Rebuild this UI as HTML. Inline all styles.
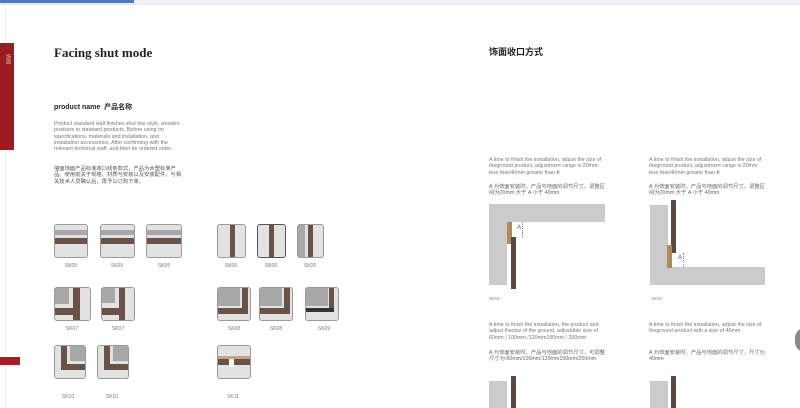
<!DOCTYPE html><html><head><meta charset="utf-8"><style>
*{margin:0;padding:0;box-sizing:border-box}
body{width:800px;height:408px;background:#fff;position:relative;overflow:hidden;font-family:"Liberation Sans","Noto Sans CJK SC",sans-serif}
.a{position:absolute}
.t{position:absolute;border:1px solid #9a9a9a;border-radius:3px;background:#e2e2e2;overflow:hidden}
.t div{position:absolute}
.g{background:#a8a8a8}.b{background:#6b5248}.w{background:#fff}.tan{background:#c7a57a}
.lb{position:absolute;font-size:5px;color:#777;width:40px;text-align:center}
.p{position:absolute;font-size:5.3px;line-height:6.3px;color:#777}
</style></head><body>
<div class="a" style="left:0;top:0;width:800px;height:4px;background:#eef0f3"></div>
<div class="a" style="left:0;top:0;width:134px;height:3px;background:#4a78c4"></div>
<div class="a" style="left:0;top:4px;width:800px;height:1px;background:#e6e6e6"></div>
<div class="a" style="left:5px;top:5px;width:1px;height:403px;background:#eee"></div>
<div class="a" style="left:0;top:43px;width:14px;height:107px;background:#9b1c20"></div>
<div class="a" style="left:5px;top:54px;font-size:5px;color:#e8c0c0;writing-mode:vertical-rl">饰面</div>
<div class="a" style="left:0;top:357px;width:20px;height:8px;background:#a81c22"></div>
<div class="a" style="left:54px;top:45px;font:bold 13px 'Liberation Serif',serif;color:#222">Facing shut mode</div>
<div class="a" style="left:54px;top:102px;font-size:7px;font-weight:bold;color:#222">product name &nbsp;产品名称</div>
<div class="p" style="left:54px;top:121px;width:130px">Product standard wall finishes shut line style, wooden products in standard products, Before using on specifications, materials and installation, and installation accessories, After confirming with the relevant technical staff, and then be ordered order.</div>
<div class="p" style="left:54px;top:166px;width:130px;color:#555">墙面饰面产品标准收口线条款式，产品为木塑标准产品。使用前关于规格、材质与安装以及安装配件，与相关技术人员确认后，再予以订购下单。</div>

<!-- row1 SK05 -->
<div class="t" style="left:54px;top:224px;width:34px;height:34px"><div class="g" style="left:0;top:5px;width:34px;height:5px"></div><div class="b" style="left:0;top:13px;width:34px;height:6px"></div></div>
<div class="t" style="left:100px;top:224px;width:35px;height:34px"><div class="g" style="left:0;top:5px;width:35px;height:5px"></div><div class="b" style="left:0;top:13px;width:35px;height:6px"></div></div>
<div class="t" style="left:146px;top:224px;width:36px;height:34px"><div class="g" style="left:0;top:5px;width:36px;height:5px"></div><div class="b" style="left:0;top:13px;width:36px;height:6px"></div></div>
<div class="lb" style="left:51px;top:263px">SK05</div><div class="lb" style="left:97px;top:263px">SK05</div><div class="lb" style="left:144px;top:263px">SK05</div>
<!-- SK06 -->
<div class="t" style="left:217px;top:224px;width:29px;height:34px"><div class="b" style="left:12px;top:0;width:5px;height:34px"></div></div>
<div class="t" style="left:257px;top:224px;width:29px;height:34px;border-color:#555"><div class="b" style="left:11px;top:0;width:5px;height:34px"></div></div>
<div class="t" style="left:297px;top:224px;width:27px;height:34px"><div class="g" style="left:0;top:0;width:7px;height:34px"></div><div class="b" style="left:10px;top:0;width:5px;height:34px"></div></div>
<div class="lb" style="left:211px;top:263px">SK06</div><div class="lb" style="left:251px;top:263px">SK06</div><div class="lb" style="left:290px;top:263px">SK06</div>
<!-- row2 -->
<div class="t" style="left:54px;top:287px;width:37px;height:34px"><div class="g" style="left:0;top:0;width:14px;height:16px"></div><div class="b" style="left:18px;top:0;width:7px;height:34px"></div><div class="b" style="left:0;top:20px;width:25px;height:7px"></div></div>
<div class="t" style="left:101px;top:287px;width:34px;height:34px"><div class="g" style="left:0;top:0;width:13px;height:15px"></div><div class="b" style="left:17px;top:0;width:6px;height:34px"></div><div class="b" style="left:0;top:20px;width:23px;height:7px"></div></div>
<div class="lb" style="left:52px;top:326px">SK07</div><div class="lb" style="left:98px;top:326px">SK07</div>
<div class="t" style="left:217px;top:287px;width:34px;height:34px"><div class="g" style="left:0;top:0;width:22px;height:18px"></div><div class="b" style="left:24px;top:0;width:6px;height:26px"></div><div class="b" style="left:0;top:20px;width:30px;height:6px"></div></div>
<div class="t" style="left:259px;top:287px;width:34px;height:34px"><div class="g" style="left:0;top:0;width:22px;height:18px"></div><div class="b" style="left:24px;top:0;width:6px;height:26px"></div><div class="b" style="left:0;top:20px;width:30px;height:6px"></div></div>
<div class="t" style="left:305px;top:287px;width:34px;height:34px"><div class="g" style="left:0;top:0;width:22px;height:18px"></div><div class="b" style="left:23px;top:0;width:5px;height:24px"></div><div class="b" style="left:0;top:20px;width:28px;height:4px;background:#333"></div></div>
<div class="lb" style="left:214px;top:326px">SK08</div><div class="lb" style="left:256px;top:326px">SK08</div><div class="lb" style="left:304px;top:326px">SK09</div>
<!-- row3 -->
<div class="t" style="left:54px;top:345px;width:32px;height:34px"><div class="g" style="left:15px;top:0;width:17px;height:15px"></div><div class="b" style="left:6px;top:0;width:6px;height:24px"></div><div class="b" style="left:6px;top:18px;width:26px;height:6px"></div></div>
<div class="t" style="left:97px;top:345px;width:32px;height:34px"><div class="g" style="left:15px;top:0;width:17px;height:15px"></div><div class="b" style="left:6px;top:0;width:6px;height:24px"></div><div class="b" style="left:6px;top:18px;width:26px;height:6px"></div></div>
<div class="lb" style="left:48px;top:394px">SK10</div><div class="lb" style="left:92px;top:394px">SK10</div>
<div class="t" style="left:217px;top:345px;width:34px;height:34px"><div class="tan" style="left:0;top:10px;width:34px;height:3px"></div><div class="b" style="left:0;top:13px;width:34px;height:6px"></div><div class="w" style="left:11px;top:13px;width:5px;height:8px"></div></div>
<div class="lb" style="left:213px;top:394px">SK11</div>

<div class="a" style="left:489px;top:45px;font-size:9px;font-weight:bold;color:#222">饰面收口方式</div>
<div class="p" style="left:489px;top:157px;width:118px">A time to finish the installation, adjust the size of theground product, adjustment range is 20mm- less than40mm greater than A</div>
<div class="p" style="left:489px;top:184px;width:118px;color:#666">A 为饰面安装时，产品与地面的调节尺寸，调整区间为20mm 大于 A 小于 40mm</div>
<div class="p" style="left:649px;top:157px;width:118px">A time to finish the installation, adjust the size of theground product, adjustment range is 20mm less than40mm greater than A</div>
<div class="p" style="left:649px;top:184px;width:118px;color:#666">A 为饰面安装时，产品与地面的调节尺寸，调整区间为20mm 大于 A 小于 40mm</div>
<!-- diagram1 -->
<div class="a" style="left:489px;top:204px;width:116px;height:18px;background:#cbcbcb"></div>
<div class="a" style="left:489px;top:204px;width:18px;height:81px;background:#cbcbcb"></div>
<div class="a" style="left:507px;top:222px;width:5px;height:22px;background:#b08a5c"></div>
<div class="a" style="left:511px;top:237px;width:5px;height:52px;background:#5f4a42"></div>
<div class="a" style="left:522px;top:222px;width:1px;height:15px;border-left:1px dotted #888"></div>
<div class="a" style="left:517px;top:225px;font-size:6px;color:#555">A</div>
<div class="a" style="left:489px;top:296px;font-size:4.5px;color:#888">SK01</div>
<!-- diagram2 -->
<div class="a" style="left:650px;top:205px;width:18px;height:80px;background:#cbcbcb"></div>
<div class="a" style="left:650px;top:267px;width:115px;height:18px;background:#cbcbcb"></div>
<div class="a" style="left:671px;top:200px;width:5px;height:53px;background:#5f4a42"></div>
<div class="a" style="left:667px;top:245px;width:5px;height:23px;background:#b08a5c"></div>
<div class="a" style="left:683px;top:253px;width:1px;height:14px;border-left:1px dotted #888"></div>
<div class="a" style="left:678px;top:255px;font-size:6px;color:#555">A</div>
<div class="a" style="left:651px;top:296px;font-size:4.5px;color:#888">SK02</div>
<!-- lower -->
<div class="p" style="left:489px;top:322px;width:118px">A time to finish the installation, the product and adjust thesize of the ground, adjustable size of 60mm / 100mm /120mm150mm / 200mm</div>
<div class="p" style="left:489px;top:350px;width:118px;color:#666">A 为饰面安装时，产品与地面的调节尺寸，可调整尺寸为:60mm/100mm/120mm150mm/200mm</div>
<div class="p" style="left:649px;top:322px;width:118px">A time to finish the installation, adjust the size of theground product with a size of 40mm</div>
<div class="p" style="left:649px;top:350px;width:118px;color:#666">A 为饰面安装时，产品与地面的调节尺寸，尺寸为40mm</div>
<div class="a" style="left:489px;top:381px;width:18px;height:27px;background:#cbcbcb"></div>
<div class="a" style="left:511px;top:376px;width:5px;height:32px;background:#5f4a42"></div>
<div class="a" style="left:650px;top:381px;width:18px;height:27px;background:#cbcbcb"></div>
<div class="a" style="left:671px;top:376px;width:5px;height:32px;background:#5f4a42"></div>
<div class="a" style="left:795px;top:328px;width:20px;height:24px;border-radius:12px;background:#8a8a8a"></div>
</body></html>
